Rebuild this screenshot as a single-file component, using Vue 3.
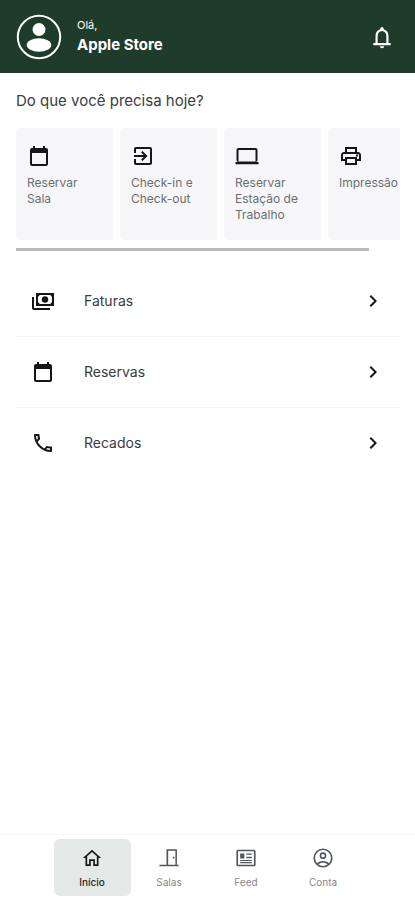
<template>
  <div class="app">
    <header class="topbar">
      <svg class="avatar" viewBox="0 0 46 46" aria-hidden="true">
        <circle cx="23" cy="23" r="21.2" fill="none" stroke="#fff" stroke-width="2" />
        <circle cx="23" cy="15.5" r="6.5" fill="#fff" />
        <ellipse cx="23" cy="31" rx="12.3" ry="6.8" fill="#fff" />
      </svg>
      <div class="greeting">
        <span class="hello">Olá,</span>
        <strong class="user">Apple Store</strong>
      </div>
      <button class="bell" type="button" aria-label="Notificações">
        <svg viewBox="0 0 24 24"><path :d="icons.bell" /></svg>
      </button>
    </header>

    <main class="content">
      <h1 class="title">Do que você precisa hoje?</h1>

      <div class="cards">
        <button v-for="card in cards" :key="card.label" class="card" type="button">
          <svg viewBox="0 0 24 24" aria-hidden="true"><path :d="icons[card.icon]" /></svg>
          <span>{{ card.label }}</span>
        </button>
      </div>
      <div class="scroll-track">
        <div class="scroll-thumb"></div>
      </div>

      <ul class="menu">
        <li v-for="item in menu" :key="item.label">
          <a href="#" class="menu-link">
            <svg class="menu-icon" viewBox="0 0 24 24" aria-hidden="true"><path :d="icons[item.icon]" /></svg>
            <span class="menu-label">{{ item.label }}</span>
            <svg class="chevron" viewBox="0 0 24 24" aria-hidden="true"><path :d="icons.chevron" /></svg>
          </a>
        </li>
      </ul>
    </main>

    <nav class="tabbar">
      <button
        v-for="tab in tabs"
        :key="tab.label"
        class="tab"
        :class="{ active: tab.label === activeTab }"
        type="button"
        @click="activeTab = tab.label"
      >
        <svg viewBox="0 0 24 24" aria-hidden="true"><path :d="icons[tab.icon]" /></svg>
        <span>{{ tab.label }}</span>
      </button>
    </nav>
  </div>
</template>

<script setup>
import { ref } from 'vue'

const activeTab = ref('Início')

const icons = {
  bell: 'M10 20.500h4c0 1-.9 1.800-2 1.800s-2-.8-2-1.800zM18 17.500v-6.500c0-3.070-1.630-5.400-4.500-6.120V4.300c0-.83-.67-1.500-1.500-1.500s-1.500.67-1.500 1.500v.58C7.640 5.600 6 7.920 6 11v6.500H4v2h16v-2zM16 17.500H8V11c0-2.480 1.510-4.500 4-4.500s4 2.020 4 4.500z',
  calendar: 'M19 4h-1V2h-2v2H8V2H6v2H5c-1.100 0-2 .9-2 2v14c0 1.100.9 2 2 2h14c1.100 0 2-.9 2-2V6c0-1.100-.9-2-2-2zM19 20H5V9h14z',
  enter: 'M10.090 15.590 11.500 17l5-5-5-5-1.410 1.410L12.670 11H3v2h9.670zM19 3H5c-1.110 0-2 .9-2 2v4h2V5h14v14H5v-4H3v4c0 1.100.89 2 2 2h14c1.100 0 2-.9 2-2V5c0-1.100-.9-2-2-2z',
  laptop: 'M20.500 18c1.100 0 2-.9 2-2V6c0-1.100-.9-2-2-2h-17c-1.100 0-2 .9-2 2v10c0 1.100.9 2 2 2H.5v2.200h23V18zM3.500 6h17v11.500h-17z',
  printer: 'M19 8h-1V3H6v5H5c-1.660 0-3 1.340-3 3v6h4v4h12v-4h4v-6c0-1.660-1.340-3-3-3zM8 5h8v3H8zM16 19H8v-4h8zM18 15v-2H6v2H4v-4c0-.55.45-1 1-1h14c.55 0 1 .45 1 1v4zM17 10.500h2v2h-2z',
  money: 'M5 4v13h18V4zM7 7.500c.9 0 1.500-.6 1.500-1.500h11c0 .9.6 1.500 1.500 1.500v6c-.9 0-1.500.6-1.500 1.500h-11c0-.9-.6-1.500-1.500-1.500zM14 7.300a3.200 3.200 0 1 0 0 6.400a3.200 3.200 0 1 0 0-6.400zM1 8v11c0 1.100.9 2 2 2h16v-2H3V8z',
  phone: 'M6.540 5c.06.890.21 1.760.45 2.590l-1.200 1.200c-.41-1.200-.67-2.470-.76-3.790h1.510m9.860 12.020c.85.240 1.720.390 2.600.450v1.490c-1.320-.09-2.590-.35-3.800-.75l1.200-1.190M7.500 3H4c-.55 0-1 .45-1 1 0 9.390 7.610 17 17 17 .55 0 1-.45 1-1v-3.490c0-.55-.45-1-1-1-1.240 0-2.450-.2-3.570-.57-.36-.12-.74-.03-1.020.24l-2.200 2.200c-2.830-1.450-5.150-3.760-6.590-6.590l2.200-2.200c.28-.28.36-.67.25-1.020C8.700 6.450 8.500 5.250 8.500 4c0-.55-.45-1-1-1z',
  chevron: 'M8.600 16.600 13.200 12 8.600 7.400 10 6l6 6-6 6z',
  home: 'M12 2 1 12h3.200v9.500h6.300v-6h3v6h6.300V12H23zM12 4.700l5.800 5.300v9.500h-2.300v-6h-7v6H6.200V10z',
  door: 'M9 1.500V20H.5v2h23v-2h-2V1.500zM11 3.300h8.700V20H11zM16.500 10.500h2v2h-2z',
  feed: 'M2.500 2h19C22.600 2 23.500 2.900 23.500 4v16c0 1.100-.9 2-2 2h-19c-1.100 0-2-.9-2-2V4c0-1.100.9-2 2-2zM2.500 4v16h19V4zM5 6.500h5v6H5zM12.500 6.500H19v1.700h-6.500zM12.500 10.500H19v1.700h-6.500zM5 14.300h14v1.400H5zM5 16.800h14v1.400H5z',
  account: 'M12 .5a11.500 11.500 0 1 0 0 23a11.500 11.500 0 1 0 0-23zM6.300 19.500c1.500-1.200 3.600-1.900 5.700-1.900s4.200.7 5.700 1.900a9.500 9.500 0 0 1-11.400 0zM19.200 18.200c-1.900-1.600-4.600-2.600-7.200-2.600s-5.300 1-7.200 2.600a9.500 9.500 0 1 1 14.400 0zM12 5.200a4 4 0 1 0 0 8a4 4 0 1 0 0-8zM12 7.100a2.100 2.100 0 1 1 0 4.200a2.100 2.100 0 1 1 0-4.200z',
}

const cards = [
  { label: 'Reservar Sala', icon: 'calendar' },
  { label: 'Check-in e Check-out', icon: 'enter' },
  { label: 'Reservar Estação de Trabalho', icon: 'laptop' },
  { label: 'Impressão', icon: 'printer' },
]

const menu = [
  { label: 'Faturas', icon: 'money' },
  { label: 'Reservas', icon: 'calendar' },
  { label: 'Recados', icon: 'phone' },
]

const tabs = [
  { label: 'Início', icon: 'home' },
  { label: 'Salas', icon: 'door' },
  { label: 'Feed', icon: 'feed' },
  { label: 'Conta', icon: 'account' },
]
</script>

<style>
body {
  margin: 0;
  background: #fff;
}
</style>

<style scoped>
.app {
  display: flex;
  flex-direction: column;
  min-height: 100vh;
  font-family: Inter, Roboto, sans-serif;
  color: #3a3c3e;
}
button {
  border: none;
  padding: 0;
  background: none;
  font-family: inherit;
  color: inherit;
  cursor: pointer;
}
svg {
  display: block;
  flex-shrink: 0;
  fill: currentColor;
}
svg path {
  fill-rule: evenodd;
}
.topbar {
  display: flex;
  align-items: center;
  height: 73px;
  padding: 0 20px 0 16px;
  background: #1f3c2a;
  color: #fff;
  box-sizing: border-box;
}
.avatar {
  width: 46px;
  height: 46px;
}
.greeting {
  display: flex;
  flex-direction: column;
  flex: 1;
  margin-left: 15px;
}
.hello {
  font-size: 11px;
  line-height: 16px;
}
.user {
  font-size: 15px;
  line-height: 23px;
  font-weight: 700;
}
.bell svg {
  width: 26px;
  height: 26px;
}
.content {
  flex: 1;
  padding: 16px 15px 0 16px;
}
.title {
  margin: 0 0 16px;
  font-size: 15px;
  line-height: 23px;
  font-weight: 400;
}
.cards {
  display: flex;
  gap: 7px;
  overflow: hidden;
}
.card {
  display: flex;
  flex-direction: column;
  flex: 0 0 97px;
  gap: 7px;
  height: 112px;
  padding: 16px 11px 0;
  border-radius: 4px;
  background: #f6f6f8;
  box-sizing: border-box;
  text-align: left;
  font-size: 12px;
  line-height: 16px;
  color: #6d6e70;
}
.card svg {
  width: 24px;
  height: 24px;
  color: #151617;
}
.scroll-track {
  margin-top: 8px;
}
.scroll-thumb {
  width: 92%;
  height: 3px;
  background: #b9b9b9;
}
.menu {
  margin: 15px 0 0;
  padding: 0;
  list-style: none;
}
.menu li + li {
  border-top: 1px solid #f4f4f4;
}
.menu-link {
  display: flex;
  align-items: center;
  height: 70px;
  padding: 0 15px;
  color: inherit;
  text-decoration: none;
}
.menu-icon,
.chevron {
  width: 24px;
  height: 24px;
  color: #151617;
}
.menu-label {
  flex: 1;
  margin-left: 29px;
  font-size: 14px;
  line-height: 20px;
}
.tabbar {
  display: flex;
  justify-content: center;
  padding: 4px 0;
  border-top: 1px solid #fafafa;
}
.tab {
  display: flex;
  flex-direction: column;
  align-items: center;
  justify-content: center;
  gap: 8px;
  width: 77px;
  height: 57px;
  border-radius: 6px;
  font-size: 10px;
  line-height: 12px;
  color: #85888b;
}
.tab svg {
  width: 20px;
  height: 20px;
  color: #50565d;
}
.tab.active {
  background: #e4e8e6;
  color: #252827;
  font-weight: 500;
}
.tab.active svg {
  color: #151617;
}
</style>
